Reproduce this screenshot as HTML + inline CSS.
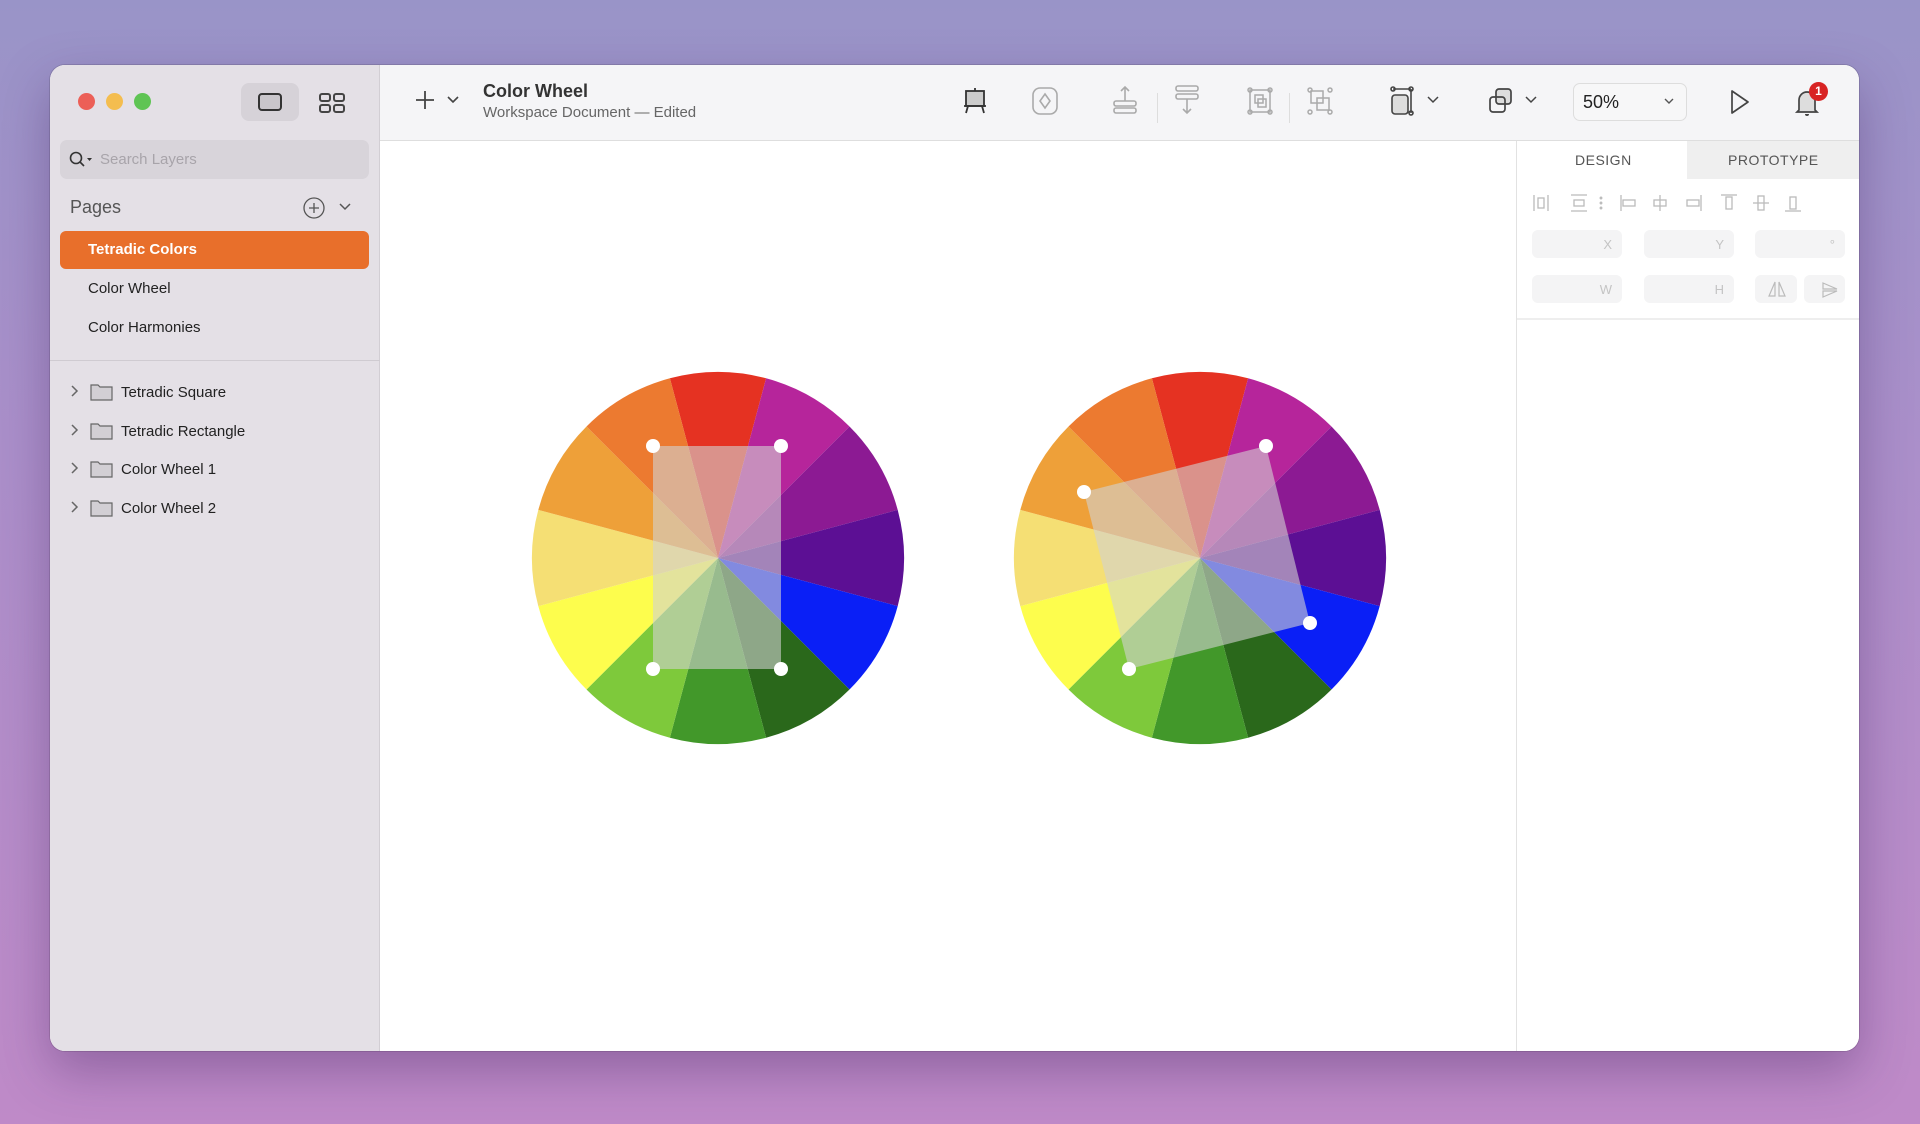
<!DOCTYPE html>
<html><head><meta charset="utf-8"><style>
*{box-sizing:border-box;margin:0;padding:0}
body{width:1920px;height:1124px;overflow:hidden;font-family:"Liberation Sans",sans-serif;background:linear-gradient(180deg,#9994c8 0%,#ab8fca 40%,#bf8ac8 100%);position:relative}
.win{position:absolute;left:50px;top:65px;width:1809px;height:986px;border-radius:15px;overflow:hidden;background:#fff;box-shadow:0 20px 50px rgba(60,30,90,.35),0 0 0 1px rgba(0,0,0,.12)}
.side{position:absolute;left:0;top:0;width:330px;height:986px;background:#e4e0e6;border-right:1px solid #d2ced4}
.tb{position:absolute;left:330px;top:0;right:0;height:76px;background:#f5f5f7;border-bottom:1px solid #dedede}
.abs{position:absolute}
.dot{position:absolute;width:17px;height:17px;border-radius:50%;top:28px}
.t{position:absolute;white-space:nowrap}
.panel{position:absolute;left:1466px;top:76px;right:0;bottom:0;border-left:1px solid #e2e2e2;background:#fff}
.inp{position:absolute;height:28px;background:#f4f4f5;border-radius:6px;color:#c4c4c4;font-size:13px;text-align:right;padding:7px 10px 0 0}
</style></head><body>
<div class="win">
 <div class="side">
  <div class="dot" style="left:28px;background:#ec5f57"></div>
  <div class="dot" style="left:56px;background:#f4bd4f"></div>
  <div class="dot" style="left:84px;background:#5fc454"></div>
  <div class="abs" style="left:191px;top:18px;width:58px;height:38px;border-radius:8px;background:#d6d2d8"></div>
  <svg class="abs" style="left:206px;top:27px" width="28" height="20" viewBox="0 0 28 20"><rect x="3" y="2" width="22" height="16" rx="3" fill="#c9c6cb" stroke="#333" stroke-width="2"/></svg>
  <svg class="abs" style="left:268px;top:27px" width="28" height="22" viewBox="0 0 28 22"><g fill="none" stroke="#444" stroke-width="2"><rect x="2" y="2" width="10" height="7" rx="2"/><rect x="16" y="2" width="10" height="7" rx="2"/><rect x="2" y="13" width="10" height="7" rx="2"/><rect x="16" y="13" width="10" height="7" rx="2"/></g></svg>
  <div class="abs" style="left:10px;top:75px;width:309px;height:39px;border-radius:7px;background:#d8d4da"></div>
  <svg class="abs" style="left:18px;top:85px" width="26" height="20"><circle cx="8" cy="8" r="5.5" fill="none" stroke="#333" stroke-width="1.6"/><line x1="12" y1="12" x2="16" y2="16" stroke="#333" stroke-width="1.6"/><path d="M19 8h5l-2.5 3z" fill="#333"/></svg>
  <div class="t" style="left:50px;top:86px;font-size:15px;color:#a8a4aa">Search Layers</div>
  <div class="t" style="left:20px;top:132px;font-size:18px;color:#555">Pages</div>
  <svg class="abs" style="left:252px;top:131px" width="24" height="24"><circle cx="12" cy="12" r="10" fill="none" stroke="#555" stroke-width="1.3"/><path d="M12 7v10M7 12h10" stroke="#555" stroke-width="1.3"/></svg>
  <svg class="abs" style="left:288px;top:136px" width="14" height="12"><path d="M2 3l5 5 5-5" fill="none" stroke="#555" stroke-width="1.5"/></svg>
  <div class="abs" style="left:10px;top:166px;width:309px;height:38px;border-radius:6px;background:#e86f2b"></div>
  <div class="t" style="left:38px;top:176px;font-size:15px;color:#fff;font-weight:bold">Tetradic Colors</div>
  <div class="t" style="left:38px;top:215px;font-size:15px;color:#222">Color Wheel</div>
  <div class="t" style="left:38px;top:254px;font-size:15px;color:#222">Color Harmonies</div>
  <div class="abs" style="left:0;top:295px;width:330px;height:1px;background:#cfcbd1"></div>
 </div>
 <div class="tb">
  <svg class="abs" style="left:33px;top:23px" width="24" height="24"><path d="M12 3v18M3 12h18" stroke="#444" stroke-width="1.8"/></svg>
  <svg class="abs" style="left:66px;top:30px" width="14" height="10"><path d="M2 2l5 5 5-5" fill="none" stroke="#444" stroke-width="1.6"/></svg>
  <div class="t" style="left:103px;top:16px;font-size:18px;font-weight:bold;color:#333">Color Wheel</div>
  <div class="t" style="left:103px;top:39px;font-size:15px;color:#666">Workspace Document — Edited</div>
  <svg class="abs" style="left:580px;top:20px" width="30" height="32" viewBox="0 0 30 32"><rect x="6" y="6" width="18" height="15" fill="#ccc" stroke="#333" stroke-width="1.8"/><path d="M4 21h22M15 3v3M8 21l-2 7M22 21l2 7" stroke="#333" stroke-width="1.8" fill="none"/></svg>
  <svg class="abs" style="left:650px;top:20px" width="30" height="32"><rect x="3" y="3" width="24" height="26" rx="7" fill="none" stroke="#aaa" stroke-width="1.6"/><path d="M15 9l5 7-5 7-5-7z" fill="none" stroke="#aaa" stroke-width="1.6"/></svg>
  <svg class="abs" style="left:730px;top:18px" width="30" height="34"><g stroke="#aaa" stroke-width="1.6" fill="none"><path d="M15 4v14M11 8l4-4 4 4"/><rect x="4" y="18" width="22" height="5" rx="2"/><rect x="4" y="25" width="22" height="5" rx="2"/></g></svg>
  <div class="abs" style="left:777px;top:28px;width:1px;height:30px;background:#ddd"></div>
  <svg class="abs" style="left:792px;top:18px" width="30" height="34"><g stroke="#aaa" stroke-width="1.6" fill="none"><rect x="4" y="3" width="22" height="5" rx="2"/><rect x="4" y="11" width="22" height="5" rx="2"/><path d="M15 16v14M11 26l4 4 4-4"/></g></svg>
  <svg class="abs" style="left:865px;top:20px" width="30" height="32"><g stroke="#aaa" stroke-width="1.5" fill="none"><rect x="5" y="5" width="20" height="22"/><rect x="10" y="10" width="8" height="8"/><rect x="13" y="14" width="8" height="8"/><circle cx="5" cy="5" r="2"/><circle cx="25" cy="5" r="2"/><circle cx="5" cy="27" r="2"/><circle cx="25" cy="27" r="2"/></g></svg>
  <div class="abs" style="left:909px;top:28px;width:1px;height:30px;background:#ddd"></div>
  <svg class="abs" style="left:925px;top:20px" width="30" height="32"><g stroke="#aaa" stroke-width="1.5" fill="none"><rect x="6" y="6" width="12" height="12"/><rect x="12" y="13" width="12" height="12"/><circle cx="5" cy="5" r="2"/><circle cx="25" cy="5" r="2"/><circle cx="5" cy="27" r="2"/><circle cx="25" cy="27" r="2"/></g></svg>
  <svg class="abs" style="left:1008px;top:20px" width="30" height="32"><g stroke="#444" stroke-width="1.6" fill="none"><rect x="4" y="10" width="16" height="19" rx="3" fill="#ddd"/><path d="M5 4h18M23 4v24"/><circle cx="5" cy="4" r="2"/><circle cx="23" cy="4" r="2"/><circle cx="23" cy="28" r="2"/></g></svg>
  <svg class="abs" style="left:1046px;top:30px" width="14" height="10"><path d="M2 2l5 5 5-5" fill="none" stroke="#444" stroke-width="1.5"/></svg>
  <svg class="abs" style="left:1106px;top:20px" width="30" height="32"><g stroke="#444" stroke-width="1.7" fill="#ddd"><rect x="10" y="4" width="15" height="15" rx="3"/><rect x="4" y="12" width="15" height="15" rx="3" fill="none"/></g></svg>
  <svg class="abs" style="left:1144px;top:30px" width="14" height="10"><path d="M2 2l5 5 5-5" fill="none" stroke="#444" stroke-width="1.5"/></svg>
  <div class="abs" style="left:1193px;top:18px;width:114px;height:38px;border:1px solid #ddd;border-radius:7px;background:#f7f7f8"></div>
  <div class="t" style="left:1203px;top:27px;font-size:18px;color:#222">50%</div>
  <svg class="abs" style="left:1283px;top:32px" width="12" height="9"><path d="M2 2l4 4 4-4" fill="none" stroke="#555" stroke-width="1.4"/></svg>
  <svg class="abs" style="left:1347px;top:22px" width="26" height="30"><path d="M5 4l16 11-16 11z" fill="none" stroke="#444" stroke-width="1.7" stroke-linejoin="round"/></svg>
  <svg class="abs" style="left:1412px;top:20px" width="30" height="34"><path d="M7 25V15a8 8 0 0 1 16 0v10l2 2H5z" fill="#ddd" stroke="#444" stroke-width="1.7"/><path d="M13 29a2 2 0 0 0 4 0" fill="#444"/></svg>
  <div class="abs" style="left:1429px;top:17px;width:19px;height:19px;border-radius:50%;background:#d82323;color:#fff;font-size:12px;font-weight:bold;text-align:center;line-height:19px">1</div>
 </div>
 <svg class="abs" style="left:0;top:0" width="1466" height="986">
  <defs><g id="wh">
   <path d="M0 0L-48.1 -179.7A186 186 0 0 1 48.1 -179.7Z" fill="#e53222"/>
   <path d="M0 0L48.1 -179.7A186 186 0 0 1 131.5 -131.5Z" fill="#b6259b"/>
   <path d="M0 0L131.5 -131.5A186 186 0 0 1 179.7 -48.1Z" fill="#8c1a93"/>
   <path d="M0 0L179.7 -48.1A186 186 0 0 1 179.7 48.1Z" fill="#5c0f94"/>
   <path d="M0 0L179.7 48.1A186 186 0 0 1 131.5 131.5Z" fill="#0a1ff6"/>
   <path d="M0 0L131.5 131.5A186 186 0 0 1 48.1 179.7Z" fill="#2a681b"/>
   <path d="M0 0L48.1 179.7A186 186 0 0 1 -48.1 179.7Z" fill="#42982a"/>
   <path d="M0 0L-48.1 179.7A186 186 0 0 1 -131.5 131.5Z" fill="#7ec93b"/>
   <path d="M0 0L-131.5 131.5A186 186 0 0 1 -179.7 48.1Z" fill="#fdfd4d"/>
   <path d="M0 0L-179.7 48.1A186 186 0 0 1 -179.7 -48.1Z" fill="#f5df74"/>
   <path d="M0 0L-179.7 -48.1A186 186 0 0 1 -131.5 -131.5Z" fill="#eea039"/>
   <path d="M0 0L-131.5 -131.5A186 186 0 0 1 -48.1 -179.7Z" fill="#ec7a30"/>
  </g></defs>
  <use href="#wh" transform="translate(668,493)"/>
  <use href="#wh" transform="translate(1150,493)"/>
  <rect x="603" y="381" width="128" height="223" fill="#d2d2d2" fill-opacity=".6"/>
  <g fill="#fff"><circle cx="603" cy="381" r="7"/><circle cx="731" cy="381" r="7"/><circle cx="603" cy="604" r="7"/><circle cx="731" cy="604" r="7"/></g>
  <polygon points="1216,381 1260,558 1079,604 1034,427" fill="#d2d2d2" fill-opacity=".6"/>
  <g fill="#fff"><circle cx="1216" cy="381" r="7"/><circle cx="1260" cy="558" r="7"/><circle cx="1079" cy="604" r="7"/><circle cx="1034" cy="427" r="7"/></g>
 </svg>
 <div class="panel">
  <div class="abs" style="left:170px;top:0;right:0;height:38px;background:#efefef"></div>
  <div class="t" style="left:58px;top:11px;font-size:14px;color:#555;letter-spacing:.5px">DESIGN</div>
  <div class="t" style="left:211px;top:11px;font-size:14px;color:#555;letter-spacing:.5px">PROTOTYPE</div>
  <svg class="abs" style="left:10px;top:50px" width="300" height="24"><g stroke="#bbb" stroke-width="1.3" fill="none">
   <path d="M7 4v16M21 4v16"/><rect x="11" y="7" width="6" height="10"/>
   <path d="M44 4h16M44 20h16"/><rect x="47" y="9" width="10" height="6"/>
   <circle cx="74" cy="7" r=".8"/><circle cx="74" cy="12" r=".8"/><circle cx="74" cy="17" r=".8"/>
   <path d="M94 4v16"/><rect x="96" y="9" width="12" height="6"/>
   <path d="M133 4v16"/><rect x="127" y="9" width="12" height="6"/>
   <path d="M174 4v16"/><rect x="160" y="9" width="12" height="6"/>
   <path d="M194 4h16"/><rect x="199" y="6" width="6" height="12"/>
   <path d="M226 12h16"/><rect x="231" y="5" width="6" height="14"/>
   <path d="M258 20h16"/><rect x="263" y="6" width="6" height="12"/>
  </g></svg>
  <div class="inp" style="left:15px;top:89px;width:90px">X</div>
  <div class="inp" style="left:127px;top:89px;width:90px">Y</div>
  <div class="inp" style="left:238px;top:89px;width:90px">°</div>
  <div class="inp" style="left:15px;top:134px;width:90px">W</div>
  <div class="inp" style="left:127px;top:134px;width:90px">H</div>
  <div class="inp" style="left:238px;top:134px;width:42px"></div>
  <div class="inp" style="left:287px;top:134px;width:41px"></div>
  <svg class="abs" style="left:248px;top:138px" width="80" height="20"><g stroke="#bbb" stroke-width="1.2" fill="none"><path d="M10 3L4 17h6zM14 3l6 14h-6z"/><path d="M58 4l14 6-14 0zM58 12l14 0-14 6z"/></g></svg>
  <div class="abs" style="left:0;top:177px;right:0;height:2px;background:#eee"></div>
 </div>
</div>
<div style="position:absolute;left:50px;top:65px;width:330px">
 <svg class="abs" style="left:17px;top:318px" width="300" height="170"><g stroke="#666" stroke-width="1.5" fill="none">
  <path d="M5 3l5 5-5 5"/><path d="M5 42l5 5-5 5"/><path d="M5 80l5 5-5 5"/><path d="M5 119l5 5-5 5"/>
 </g><g stroke="#666" stroke-width="1.2" fill="#d2cfd4">
  <path d="M24 2h7l2 2h12v13H24z"/><path d="M24 41h7l2 2h12v13H24z"/><path d="M24 79h7l2 2h12v13H24z"/><path d="M24 118h7l2 2h12v13H24z"/>
 </g></svg>
 <div class="t" style="left:71px;top:319px;font-size:15px;color:#222">Tetradic Square</div>
 <div class="t" style="left:71px;top:358px;font-size:15px;color:#222">Tetradic Rectangle</div>
 <div class="t" style="left:71px;top:396px;font-size:15px;color:#222">Color Wheel 1</div>
 <div class="t" style="left:71px;top:435px;font-size:15px;color:#222">Color Wheel 2</div>
</div>
</body></html>
